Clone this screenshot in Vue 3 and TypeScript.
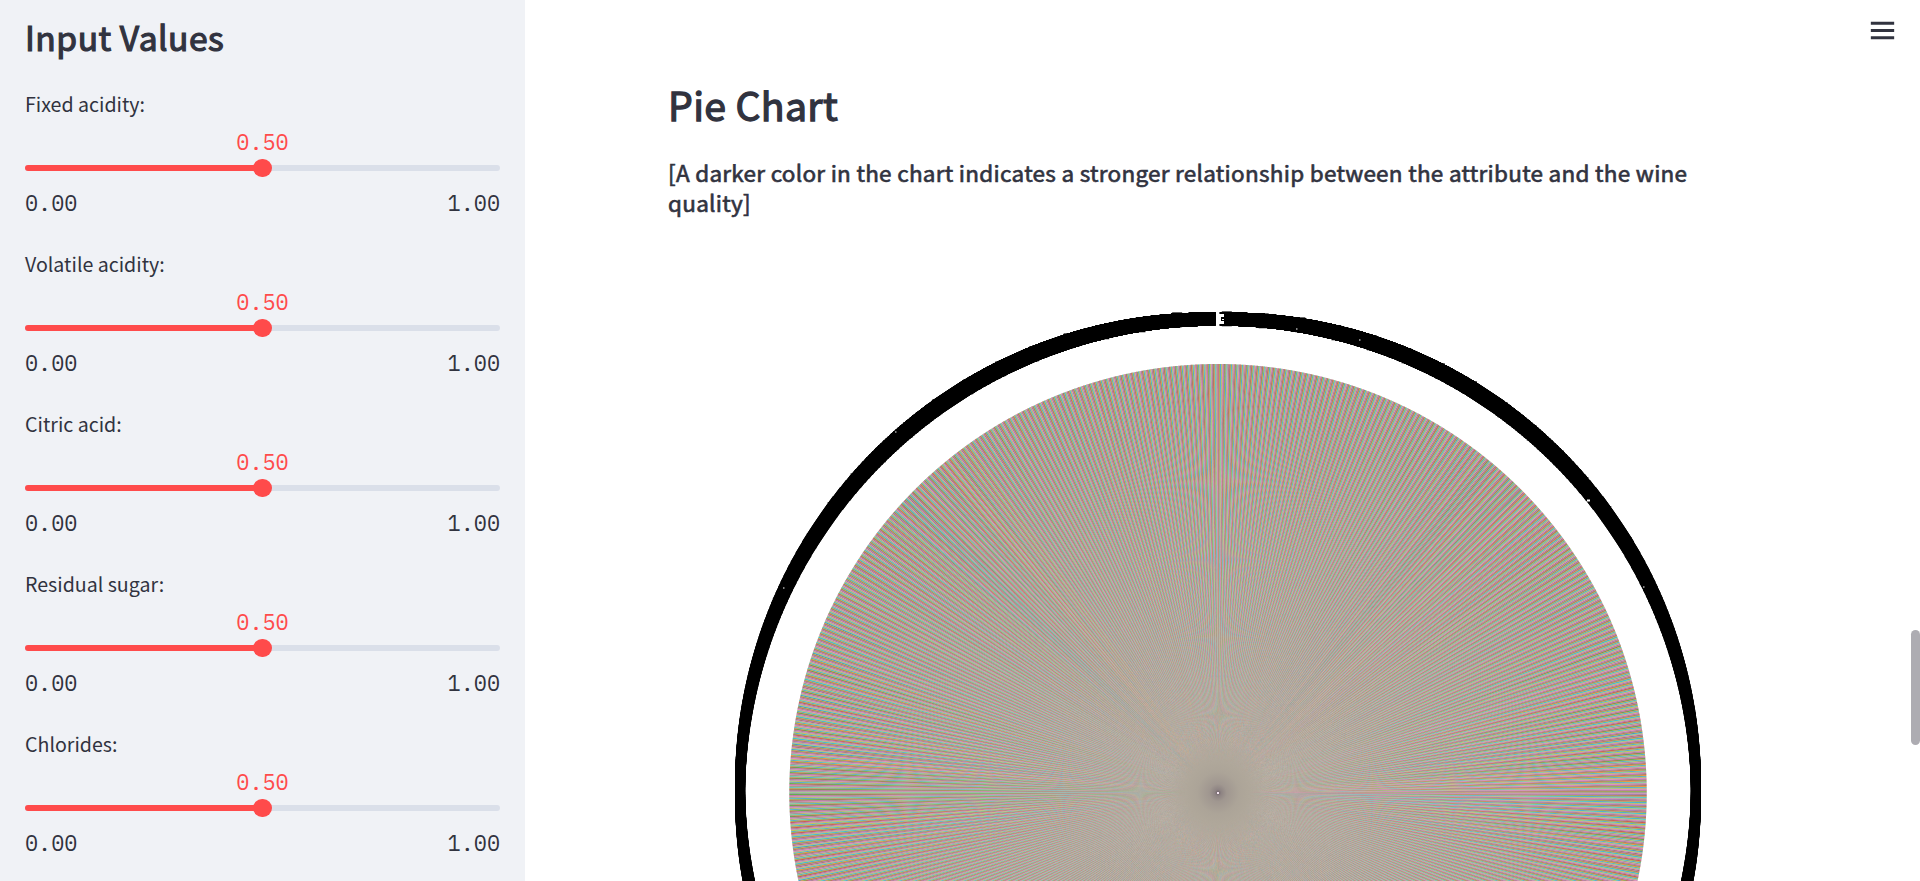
<script setup lang="ts">
import { onMounted, ref } from 'vue'

interface SliderField {
  label: string
  value: number
  min: number
  max: number
}

const fields: SliderField[] = [
  { label: 'Fixed acidity:', value: 0.5, min: 0, max: 1 },
  { label: 'Volatile acidity:', value: 0.5, min: 0, max: 1 },
  { label: 'Citric acid:', value: 0.5, min: 0, max: 1 },
  { label: 'Residual sugar:', value: 0.5, min: 0, max: 1 },
  { label: 'Chlorides:', value: 0.5, min: 0, max: 1 },
]

const percent = (f: SliderField) => `${((f.value - f.min) / (f.max - f.min)) * 100}%`

const palette = [
  '#1f77b4', '#ff7f0e', '#2ca02c', '#d62728', '#9467bd',
  '#8c564b', '#e377c2', '#7f7f7f', '#bcbd22', '#17becf',
]

const SLICES = 4898
const CX = 550
const CY = 542.7
const RADIUS = 428.7
const canvas = ref<HTMLCanvasElement | null>(null)

function drawSlices(ctx: CanvasRenderingContext2D, step: number) {
  for (let i = 0; i < SLICES; i++) {
    const a = -i * step
    const b = -(i + 1) * step
    ctx.fillStyle = palette[i % palette.length]
    ctx.beginPath()
    ctx.moveTo(CX, CY)
    ctx.lineTo(CX + RADIUS * Math.cos(a), CY + RADIUS * Math.sin(a))
    ctx.lineTo(CX + RADIUS * Math.cos(b), CY + RADIUS * Math.sin(b))
    ctx.closePath()
    ctx.fill()
  }
}

// The slices converge below one pixel here, so the hub is a blended shade.
function drawHub(ctx: CanvasRenderingContext2D) {
  const hub = ctx.createRadialGradient(CX, CY, 0, CX, CY, 55)
  hub.addColorStop(0, 'rgba(112, 98, 108, 1)')
  hub.addColorStop(0.06, 'rgba(142, 132, 131, 1)')
  hub.addColorStop(0.16, 'rgba(160, 151, 144, 1)')
  hub.addColorStop(0.38, 'rgba(172, 164, 152, 1)')
  hub.addColorStop(0.55, 'rgba(175, 167, 154, 1)')
  hub.addColorStop(1, 'rgba(175, 167, 155, 0)')
  ctx.fillStyle = hub
  ctx.beginPath()
  ctx.arc(CX, CY, 55, 0, Math.PI * 2)
  ctx.fill()
  ctx.fillStyle = '#f4e4f0'
  ctx.fillRect(CX - 1, Math.round(CY) - 1, 2, 2)
}

// One label per slice, packed so densely that they merge into a black ring.
function drawLabels(ctx: CanvasRenderingContext2D, step: number) {
  ctx.fillStyle = '#000'
  const labelRadius = RADIUS * 1.1
  for (let i = 0; i < SLICES; i++) {
    const a = -(i + 0.5) * step
    const x = CX + labelRadius * Math.cos(a)
    const y = CY + labelRadius * Math.sin(a)
    const jitter = (i * 7919) % 61 === 0 ? 0.6 : 0
    const left = Math.cos(a) > 0 ? x + 1.4 : x - 11.4
    ctx.fillRect(left, Math.round(y - 9) - jitter, 10, 13.9 + jitter * 1.6)
  }
  ctx.fillStyle = '#fff'
  ctx.fillRect(CX + 1, 64, 5, 3)
  ctx.fillRect(CX + 1, 67, 2, 7)
  ctx.fillRect(CX + 4, 69, 2, 1)
  ctx.fillRect(CX + 1, 71, 5, 3)
  ctx.fillRect(CX - 2, 61, 1, 2)
  ctx.fillRect(CX - 2, 67, 1, 3)
  const nicks = [
    [1589 - 668, 250.5, 2], [1644 - 668, 337, 1], [896 - 668, 182, 1],
    [784 - 668, 338, 1], [1297 - 668, 79, 1], [1360 - 668, 90, 1],
  ]
  for (const [x, y, s] of nicks) ctx.fillRect(x - s, y - s / 2, s * 1.5, s)
}

onMounted(() => {
  const ctx = canvas.value?.getContext('2d')
  if (!ctx) return
  const step = (Math.PI * 2) / SLICES
  drawSlices(ctx, step)
  drawHub(ctx)
  drawLabels(ctx, step)
})
</script>

<template>
  <div class="app">
    <aside class="sidebar">
      <h2 class="sidebar-title">Input Values</h2>
      <div v-for="f in fields" :key="f.label" class="field">
        <label class="field-label">{{ f.label }}</label>
        <div class="value-row">
          <span class="value" :style="{ marginLeft: percent(f) }">{{ f.value.toFixed(2) }}</span>
        </div>
        <div class="track">
          <div class="fill" :style="{ width: percent(f) }"></div>
          <div class="thumb"></div>
        </div>
        <div class="range">
          <span>{{ f.min.toFixed(2) }}</span>
          <span>{{ f.max.toFixed(2) }}</span>
        </div>
      </div>
    </aside>
    <main class="main">
      <button class="menu" aria-label="Menu">
        <svg width="35" height="35" viewBox="0 0 24 24" fill="#31333f">
          <path d="M4 18h16v-2H4v2zm0-5h16v-2H4v2zM4 6v2h16V6H4z" />
        </svg>
      </button>
      <div class="content">
        <h1 class="title">Pie Chart</h1>
        <h3 class="subtitle">[A darker color in the chart indicates a stronger relationship between the attribute and the wine quality]</h3>
        <canvas ref="canvas" class="chart" width="1100" height="631"></canvas>
      </div>
      <div class="scrollbar"></div>
    </main>
  </div>
</template>

<style scoped>
.app {
  display: flex;
  width: 1920px;
  height: 881px;
  overflow: hidden;
  background: #fff;
  color: #31333f;
  font-family: "Source Sans Pro", "Noto Sans CJK SC", sans-serif;
}
.sidebar {
  flex: none;
  box-sizing: border-box;
  width: 525px;
  height: 881px;
  padding: 15px 25px 0;
  background: #f0f2f6;
  overflow: hidden;
}
.sidebar-title {
  margin: 0 0 25px;
  font-size: 33.6px;
  line-height: 43px;
  font-weight: 400;
  letter-spacing: 0.5px;
  -webkit-text-stroke: 1.2px #31333f;
  white-space: nowrap;
}
.field {
  height: 160px;
}
.field-label {
  display: block;
  height: 42px;
  font-size: 19.6px;
  line-height: 41px;
}
.value-row {
  height: 34px;
}
.value {
  display: inline-block;
  transform: translateX(-50%);
  color: #ff4b4b;
}
.value,
.range {
  font-family: "IBM Plex Mono", "Liberation Mono", monospace;
  font-size: 21.875px;
  line-height: 34px;
}
.track {
  display: flex;
  align-items: center;
  height: 6px;
  margin-top: 6px;
  border-radius: 3px;
  background: #dadfe9;
}
.fill {
  flex: none;
  height: 6px;
  border-radius: 3px 0 0 3px;
  background: #ff4b4b;
}
.thumb {
  flex: none;
  width: 18.75px;
  height: 18.75px;
  margin-left: -9.375px;
  border-radius: 50%;
  background: #ff4b4b;
}
.range {
  display: flex;
  justify-content: space-between;
  margin-top: 15px;
}
.main {
  position: relative;
  flex: 1;
  height: 881px;
  overflow: hidden;
}
.content {
  padding: 77px 0 0 143px;
}
.title {
  margin: 0;
  font-size: 39.2px;
  line-height: 54px;
  font-weight: 400;
  letter-spacing: 0.35px;
  -webkit-text-stroke: 1.3px #31333f;
  white-space: nowrap;
}
.subtitle {
  width: 1056px;
  height: 60px;
  margin: 26px 0 0;
  font-size: 22.5px;
  line-height: 30px;
  font-weight: 400;
  letter-spacing: 0.275px;
  -webkit-text-stroke: 0.65px #31333f;
}
.chart {
  display: block;
  width: 1100px;
  height: 631px;
  margin: 33px 0 0;
}
.menu {
  position: absolute;
  top: 13px;
  right: 20px;
  width: 35px;
  height: 35px;
  padding: 0;
  border: 0;
  background: none;
}
.menu svg {
  display: block;
}
.scrollbar {
  position: absolute;
  top: 630px;
  right: 0;
  width: 9px;
  height: 115px;
  border-radius: 5px;
  background: #adacb2;
}
</style>

<style>
body {
  margin: 0;
  overflow: hidden;
}
</style>
